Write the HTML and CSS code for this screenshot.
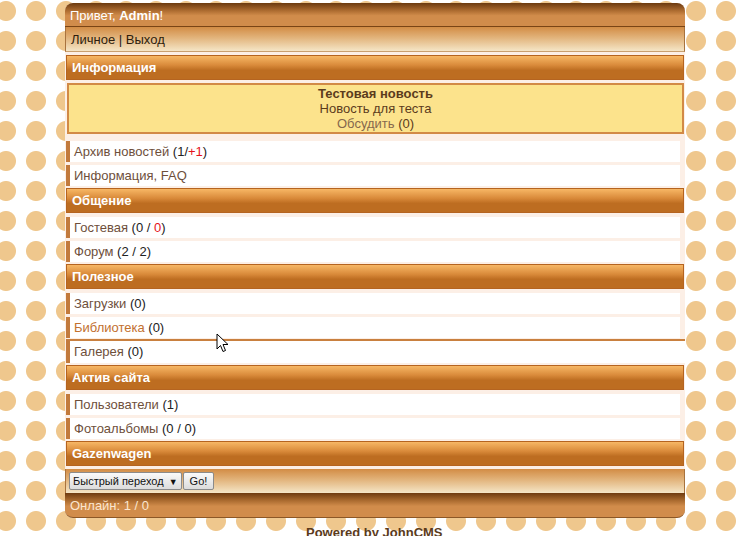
FILE: index.html
```html
<!DOCTYPE html>
<html lang="ru">
  <head>
    <meta charset="UTF-8" />
    <title>JohnCMS</title>
    <link rel="stylesheet" href="styles.css">
  </head>
  <body>
    <div class="wrap">
      <div class="hdr">Привет, <b>Admin</b>!</div>
      <div class="tmn"><a href="#">Личное</a> | <a href="#">Выход</a></div>

      <div class="phdr">Информация</div>
      <div class="news">
        <b>Тестовая новость</b><br />
        Новость для теста<br />
        <a href="#" class="soft">Обсудить</a> (0)
      </div>
      <div class="menu"><a href="#">Архив новостей</a> (1/<span class="red">+1</span>)</div>
      <div class="menu"><a href="#">Информация, FAQ</a></div>

      <div class="phdr">Общение</div>
      <div class="menu"><a href="#">Гостевая</a> (0 / <span class="red">0</span>)</div>
      <div class="menu"><a href="#">Форум</a> (2 / 2)</div>

      <div class="phdr">Полезное</div>
      <div class="menu"><a href="#">Загрузки</a> (0)</div>
      <div class="menu"><a href="#" class="hover">Библиотека</a> (0)</div>
      <div class="menu line"><a href="#">Галерея</a> (0)</div>

      <div class="phdr">Актив сайта</div>
      <div class="menu"><a href="#">Пользователи</a> (1)</div>
      <div class="menu"><a href="#">Фотоальбомы</a> (0 / 0)</div>

      <div class="phdr">Gazenwagen</div>
      <div class="gmenu">
        <span class="sel">Быстрый переход <span class="arr">&#9660;</span></span>
        <span class="btn">Go!</span>
      </div>
      <div class="footer">Онлайн: 1 / 0</div>
    </div>
    <div class="copy">Powered by JohnCMS</div>

    <svg class="cursor" width="13" height="20" viewBox="0 0 13 20">
      <path d="M1 1 L1 16 L4.5 12.5 L7 18.5 L9.5 17.5 L7 11.5 L12 11.5 Z" fill="#fff" stroke="#000" stroke-width="1" stroke-linejoin="round" />
    </svg>
  </body>
</html>
```

FILE: styles.css
```css
body {
  margin: 0;
  font-family: "Liberation Sans", Arial, sans-serif;
  font-size: 13px;
  color: #222;
  background-color: #fff;
  background-image: radial-gradient(circle, #efc78d 9.5px, rgba(239, 199, 141, 0) 10.5px);
  background-size: 30px 30px;
  background-position: -9px -4px;
  height: 536px;
  overflow: hidden;
  position: relative;
}
a {
  color: #6e4f3b;
  text-decoration: none;
}
.wrap {
  width: 620px;
  margin: 3px 0 0 65px;
  display: flex;
  flex-direction: column;
  background-color: #fcefe6;
  border-radius: 8px;
}
.hdr {
  height: 23px;
  line-height: 25px;
  padding-left: 5px;
  color: #fff;
  border-radius: 8px 8px 0 0;
  border-bottom: 1px solid #7a4415;
  background: linear-gradient(#6c3a0f 0%, #b06e32 35%, #d18c4b 55%, #d18c4b 100%);
}
.tmn {
  height: 24px;
  line-height: 25px;
  padding-left: 5px;
  border-left: 1px solid #a8733e;
  border-right: 1px solid #a8733e;
  border-bottom: 1px solid #c9a070;
  background: linear-gradient(#d28c45 0%, #e2b47c 45%, #f5e6c7 100%);
}
.tmn a {
  color: #2e1d0d;
}
.phdr {
  margin: 2px 1px 0 1px;
  height: 23px;
  line-height: 23px;
  padding-left: 5px;
  color: #fff;
  font-weight: bold;
  border: 1px solid #b56420;
  background: linear-gradient(#f7b765 0%, #d98a3a 40%, #bd6d21 62%, #bd6d21 100%);
}
.tmn + .phdr {
  margin-top: 3px;
}
.news {
  margin: 3px 1px 4px 2px;
  padding: 1px 0 1px;
  line-height: 15px;
  text-align: center;
  color: #5b3b1c;
  background-color: #fce38c;
  border: 2px solid #d28a46;
}
.news a.soft {
  color: #86684c;
}
.menu {
  margin: 3px 5px 0 1px;
  height: 21px;
  line-height: 21px;
  padding-left: 4px;
  background-color: #fff;
  border-left: 4px solid #c27a3c;
}
.phdr + .menu {
  margin-top: 4px;
}
.menu.line {
  margin-top: 1px;
  height: 22px;
  border-top: 2px solid #c9803f;
  margin-right: 0;
}
.red {
  color: #e5131a;
}
a.hover {
  color: #c2702f;
}
.gmenu {
  margin-top: 3px;
  height: 24px;
  padding-left: 3px;
  display: flex;
  align-items: center;
  gap: 1px;
  border-left: 1px solid #a8733e;
  border-right: 1px solid #a8733e;
  background: linear-gradient(#d28c45 0%, #e2b47c 45%, #f5e6c7 100%);
}
.sel,
.btn {
  height: 16px;
  line-height: 16px;
  font-size: 11px;
  white-space: nowrap;
  color: #111;
  border: 1px solid #8b8b8b;
  border-radius: 2px;
  background: linear-gradient(#fafafa, #dcdcdc);
}
.sel {
  padding: 0 3px;
}
.arr {
  font-size: 9px;
  margin-left: 2px;
}
.btn {
  padding: 0 6px;
}
.footer {
  height: 24px;
  line-height: 26px;
  padding-left: 5px;
  color: #fbe6cf;
  border-radius: 0 0 8px 8px;
  border-bottom: 1px solid #8c5726;
  background: linear-gradient(#6e3b10 0%, #a8692e 30%, #d18c4b 55%, #d18c4b 100%);
}
.copy {
  margin-top: 7px;
  padding-left: 306px;
  font-weight: bold;
  color: #5b3b1c;
}
.cursor {
  position: absolute;
  left: 216px;
  top: 333px;
}
```
